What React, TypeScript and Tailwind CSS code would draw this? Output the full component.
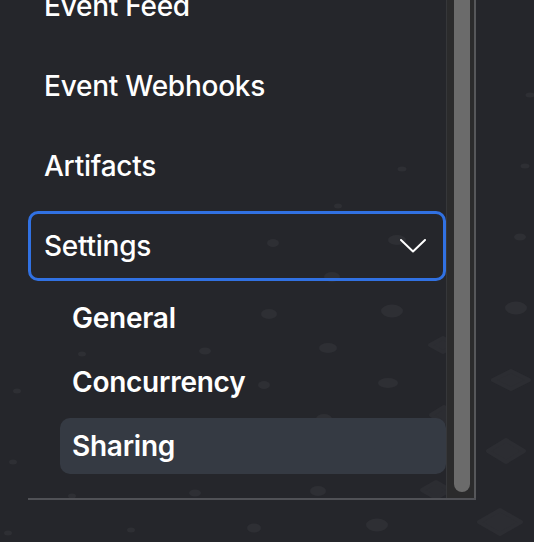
import React from 'react';

type Dot = { x: number; y: number; w: number; h: number; d?: boolean };

// faint floor pattern behind the panel
const dots: Dot[] = [
  { x: 402, y: 169, w: 9, h: 5 },
  { x: 530, y: 95, w: 9, h: 5 },
  { x: 525, y: 166, w: 9, h: 5 },
  { x: 338, y: 206, w: 8, h: 5 },
  { x: 273, y: 243, w: 12, h: 8 },
  { x: 397, y: 240, w: 18, h: 10 },
  { x: 332, y: 277, w: 16, h: 10 },
  { x: 520, y: 237, w: 12, h: 7 },
  { x: 269, y: 314, w: 16, h: 10 },
  { x: 392, y: 311, w: 22, h: 13 },
  { x: 516, y: 308, w: 22, h: 13 },
  { x: 205, y: 351, w: 12, h: 7 },
  { x: 328, y: 348, w: 18, h: 10 },
  { x: 82, y: 354, w: 8, h: 5 },
  { x: 443, y: 345, w: 30, h: 18, d: true },
  { x: 511, y: 380, w: 40, h: 22, d: true },
  { x: 264, y: 385, w: 12, h: 8 },
  { x: 388, y: 383, w: 20, h: 10 },
  { x: 17, y: 391, w: 8, h: 5 },
  { x: 77, y: 425, w: 8, h: 5 },
  { x: 200, y: 422, w: 8, h: 5 },
  { x: 324, y: 419, w: 16, h: 10 },
  { x: 444, y: 415, w: 30, h: 20, d: true },
  { x: 506, y: 451, w: 40, h: 26, d: true },
  { x: 383, y: 453, w: 22, h: 13 },
  { x: 260, y: 457, w: 12, h: 8 },
  { x: 136, y: 459, w: 8, h: 5 },
  { x: 13, y: 462, w: 8, h: 5 },
  { x: 318, y: 491, w: 16, h: 10 },
  { x: 195, y: 493, w: 12, h: 7 },
  { x: 72, y: 496, w: 8, h: 5 },
  { x: 436, y: 490, w: 32, h: 20, d: true },
  { x: 500, y: 522, w: 46, h: 28, d: true },
  { x: 377, y: 525, w: 22, h: 13 },
  { x: 254, y: 528, w: 14, h: 9 },
  { x: 131, y: 530, w: 8, h: 5 },
  { x: 8, y: 533, w: 8, h: 5 },
];

const topItems = ['Event Feed', 'Event Webhooks', 'Artifacts'];
const subItems = ['General', 'Concurrency', 'Sharing'];

function Chevron() {
  return (
    <svg width="26" height="14" viewBox="0 0 26 14" fill="none">
      <polyline points="1,1 13,12.5 25,1" stroke="#ffffff" strokeWidth="2" strokeLinecap="round" strokeLinejoin="round" />
    </svg>
  );
}

export default function App() {
  return (
    <div
      className="relative h-[542px] w-[534px] overflow-hidden bg-[#25262b] text-white"
      style={{ fontFamily: 'Inter, "Noto Sans", sans-serif' }}
    >
      <svg className="absolute inset-0" width="534" height="542">
        {dots.map((p, i) =>
          p.d ? (
            <polygon
              key={i}
              points={`${p.x - p.w / 2 + 2},${p.y} ${p.x},${p.y - p.h / 2 + 2} ${p.x + p.w / 2 - 2},${p.y} ${p.x},${p.y + p.h / 2 - 2}`}
              fill="#2c2d32"
              strokeLinejoin="round"
              stroke="#2c2d32"
              strokeWidth="4"
            />
          ) : (
            <ellipse key={i} cx={p.x} cy={p.y} rx={p.w / 2} ry={p.h / 2} fill="#2e2f34" />
          ),
        )}
      </svg>

      <div className="relative -mt-[29px] ml-[28px] flex w-[448px] border-b-2 border-[#505156]">
        {/* nav list */}
        <nav className="flex w-[418px] flex-col pb-[24px] tracking-[-0.25px]">
          <div className="flex flex-col gap-[10px]">
            {topItems.map((t) => (
              <div
                key={t}
                className="flex h-[70px] items-center rounded-[10px] border-[3px] border-transparent pl-[13px] text-[28px] font-medium"
              >
                {t}
              </div>
            ))}
            <div className="flex h-[70px] items-center justify-between rounded-[10px] border-[3px] border-[#3171e2] pl-[13px] pr-[17px] text-[28px] font-medium">
              <span>Settings</span>
              <Chevron />
            </div>
          </div>
          <div className="mt-[9px] flex flex-col gap-[8px] pl-[32px]">
            {subItems.map((s) => (
              <div
                key={s}
                className={`flex h-[56px] items-center rounded-[10px] pl-[12px] text-[28px] font-semibold ${
                  s === 'Sharing' ? 'bg-[#363b45]/95' : ''
                }`}
              >
                {s}
              </div>
            ))}
          </div>
        </nav>

        {/* scrollbar */}
        <div className="flex w-[30px] border-l border-r-2 border-l-[#36373a] border-r-[#56575a] bg-[#2b2b2c] pb-[6px] pl-[7px] pr-[4px]">
          <div className="w-[16px] rounded-b-full bg-[#6b6b6b]" />
        </div>
      </div>
    </div>
  );
}
